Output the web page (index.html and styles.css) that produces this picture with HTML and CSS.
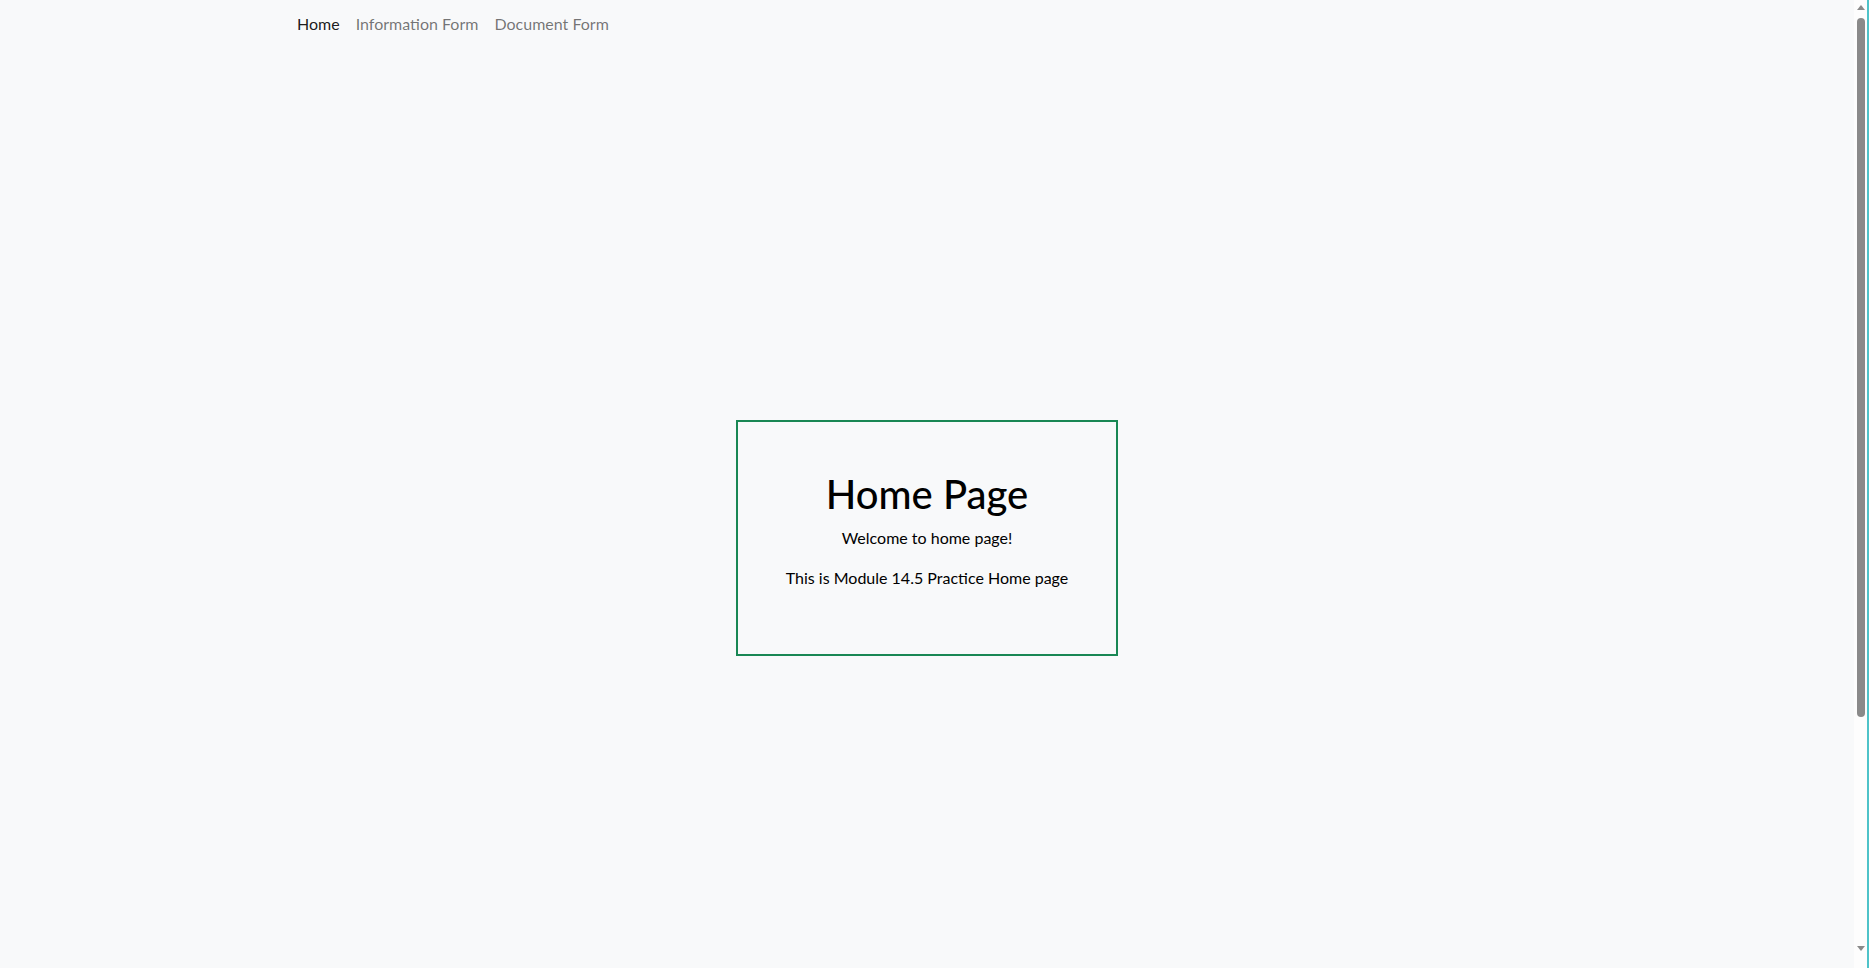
FILE: index.html
```html
<!DOCTYPE html>
<html lang="en">
<head>
<meta charset="utf-8">
<title>Home</title>
<link rel="stylesheet" href="styles.css">
</head>
<body>
<nav class="navbar">
  <div class="nav-inner">
    <a class="nav-link active" href="#">Home</a>
    <a class="nav-link" href="#">Information Form</a>
    <a class="nav-link" href="#">Document Form</a>
  </div>
</nav>
<main class="hero">
  <section class="card">
    <h1 class="title">Home Page</h1>
    <p class="lead">Welcome to home page!</p>
    <p class="lead">This is Module 14.5 Practice Home page</p>
  </section>
</main>
<footer class="footer"></footer>
<div class="scrollbar" aria-hidden="true">
  <span class="arrow up"></span>
  <span class="thumb"></span>
  <span class="arrow down"></span>
</div>
</body>
</html>
```
FILE: styles.css
```css
* { box-sizing: border-box; }
html, body { margin: 0; padding: 0; }
body {
  background: #f8f9fa;
  color: #000;
  font-family: "Lato", "Open Sans", sans-serif;
  font-size: 16px;
  line-height: 1.5;
  padding-right: 15px;
}
.navbar {
  height: 56px;
  display: flex;
  align-items: flex-start;
}
.nav-inner {
  display: flex;
  padding-left: 289px;
  padding-top: 8px;
}
.nav-link {
  padding: 4px 8px;
  text-decoration: none;
  color: rgba(0, 0, 0, 0.55);
}
.nav-link.active { color: rgba(0, 0, 0, 0.9); }
.hero {
  min-height: 100vh;
  display: flex;
  align-items: center;
  justify-content: center;
  margin-top: -2px;
}
.card {
  border: 2px solid #198754;
  padding: 48px;
  text-align: center;
}
.title {
  margin: 0 0 8px;
  font-size: 40px;
  font-weight: 500;
  line-height: 1.2;
}
.lead { margin: 0 0 16px; }
.footer { height: 273px; }

/* emulated browser scrollbar */
.scrollbar {
  position: fixed;
  top: 0;
  right: 0;
  width: 15px;
  height: 100vh;
  background: #fdfdfd;
  border-right: 2px solid #4ec3c9;
  display: flex;
  flex-direction: column;
  align-items: center;
  padding: 5px 0 0 0;
}
.arrow {
  width: 0;
  height: 0;
  border-left: 4px solid transparent;
  border-right: 4px solid transparent;
}
.arrow.up { border-bottom: 5px solid #8a8a8a; }
.arrow.down { border-top: 5px solid #8a8a8a; margin-top: 229px; }
.thumb {
  width: 8px;
  height: 699px;
  margin-top: 8px;
  background: #8a8a8a;
  border-radius: 4px;
}
```
